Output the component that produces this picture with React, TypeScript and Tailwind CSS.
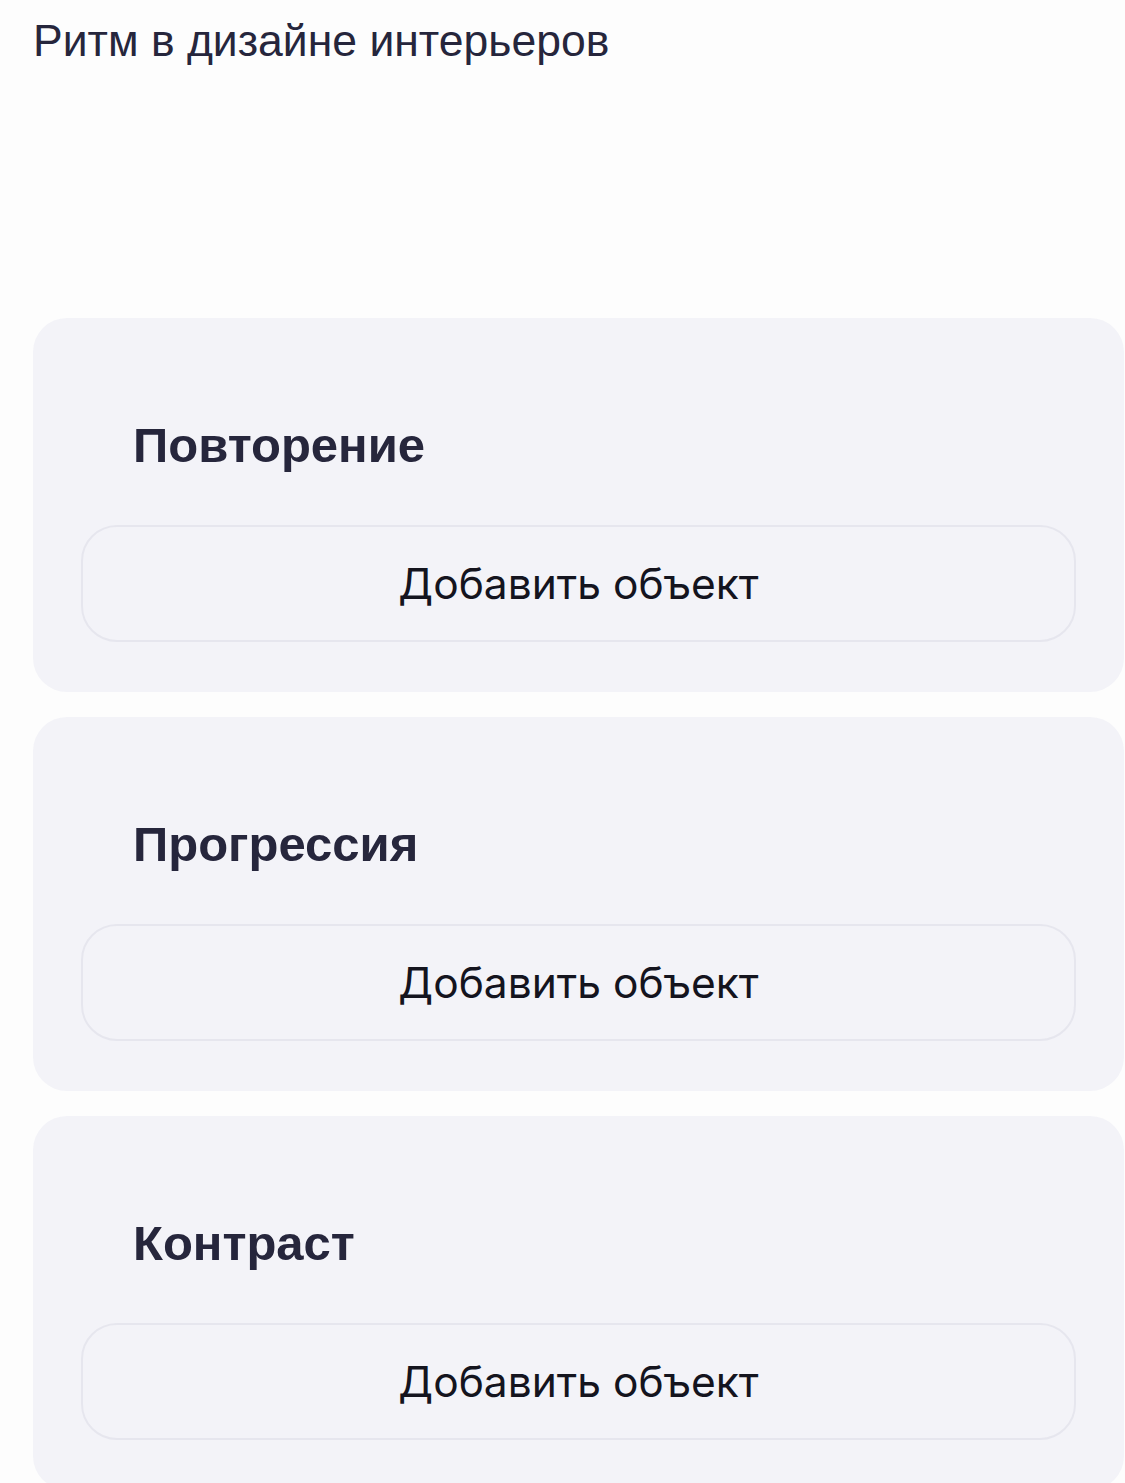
import React from 'react';

// ============================================
// Section Card
// ============================================
const sections = ['Повторение', 'Прогрессия', 'Контраст'];

const SectionCard: React.FC<{ title: string }> = ({ title }) => {
  return (
    <div className="rounded-[34px] bg-[#f3f3f8] px-[48px] pt-[97px] pb-[50px]">
      {/* Title */}
      <h2 className="pl-[52px] text-[49px] leading-[60px] font-bold text-[#26263c] font-['Liberation_Sans',Arial,sans-serif]">
        {title}
      </h2>

      {/* Add button */}
      <button
        type="button"
        className="mt-[50px] flex h-[117px] w-full items-center justify-center rounded-[36px] border-2 border-[#e6e6ee] text-[42.5px] text-[#14141e] font-['Inter',sans-serif]"
      >
        Добавить объект
      </button>
    </div>
  );
};

export default function App() {
  return (
    <div className="min-h-screen bg-[#fdfdfd] pl-[33px] pr-[1px] pt-[11px]">
      <h1 className="text-[44.5px] leading-[60px] text-[#26263c] font-['Liberation_Sans',Arial,sans-serif]">
        Ритм в дизайне интерьеров
      </h1>

      <div className="mt-[247px] flex flex-col gap-[25px]">
        {sections.map((s) => (
          <SectionCard key={s} title={s} />
        ))}
      </div>
    </div>
  );
}
